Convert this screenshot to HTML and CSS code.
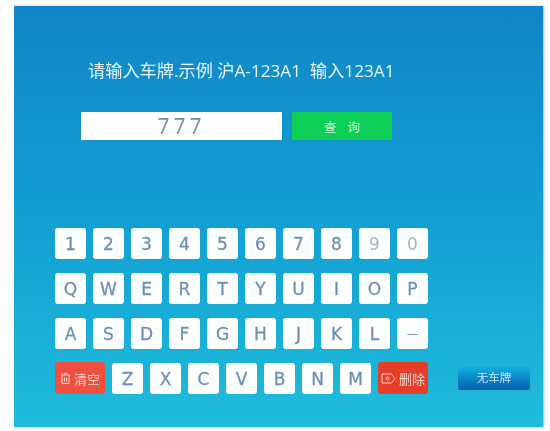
FILE: index.html
```html
<!DOCTYPE html>
<html lang="en">

<head>
    <title>车牌查询</title>
    <link rel="stylesheet" href="styles.css">
</head>

<body>
    <div class="panel">
        <p class="hint">请输入车牌.示例 沪A-123A1&nbsp;&nbsp;输入123A1</p>

        <div class="search-row">
            <div class="plate-input">777</div>
            <button class="search-btn">查&nbsp;&nbsp;&nbsp;&nbsp;询</button>
        </div>

        <div class="keyboard-row">
            <div class="keyboard">
                <div class="key-row">
                    <button class="key">1</button>
                    <button class="key">2</button>
                    <button class="key">3</button>
                    <button class="key">4</button>
                    <button class="key">5</button>
                    <button class="key">6</button>
                    <button class="key">7</button>
                    <button class="key">8</button>
                    <button class="key key-light">9</button>
                    <button class="key key-light">0</button>
                </div>
                <div class="key-row">
                    <button class="key">Q</button>
                    <button class="key">W</button>
                    <button class="key">E</button>
                    <button class="key">R</button>
                    <button class="key">T</button>
                    <button class="key">Y</button>
                    <button class="key">U</button>
                    <button class="key">I</button>
                    <button class="key">O</button>
                    <button class="key">P</button>
                </div>
                <div class="key-row">
                    <button class="key">A</button>
                    <button class="key">S</button>
                    <button class="key">D</button>
                    <button class="key">F</button>
                    <button class="key">G</button>
                    <button class="key">H</button>
                    <button class="key">J</button>
                    <button class="key">K</button>
                    <button class="key">L</button>
                    <button class="key key-dash">—</button>
                </div>
                <div class="key-row">
                    <button class="action-key clear-key">
                        <svg class="action-icon" width="11" height="13" viewBox="0 0 11 13" fill="none" stroke="currentColor">
                            <path d="M1 3h9M4 3V1.5h3V3M2 3v8.5h7V3M4.5 5.5v4M6.5 5.5v4"/>
                        </svg>
                        清空
                    </button>
                    <button class="key">Z</button>
                    <button class="key">X</button>
                    <button class="key">C</button>
                    <button class="key">V</button>
                    <button class="key">B</button>
                    <button class="key">N</button>
                    <button class="key">M</button>
                    <button class="action-key delete-key">
                        <svg class="action-icon" width="15" height="11" viewBox="0 0 15 11" fill="none" stroke="currentColor">
                            <path d="M1 1h9.5l3.5 4.5-3.5 4.5H1z"/>
                            <circle cx="6.5" cy="5.5" r="1.5"/>
                        </svg>
                        删除
                    </button>
                </div>
            </div>
            <button class="no-plate">无车牌</button>
        </div>
    </div>
</body>

</html>
```

FILE: styles.css
```css
body {
    margin: 0;
    background-color: #ffffff;
    font-family: "Liberation Sans", "Noto Sans CJK SC", sans-serif;
}

/* Blue panel */
.panel {
    width: 529px;
    height: 421px;
    margin: 6px 0 0 14px;
    box-sizing: border-box;
    padding-top: 54px;
    background: linear-gradient(to bottom, #1285c7 0%, #129fd2 50%, #1fbcdb 100%);
    box-shadow: 1px 0 2px #9fb6c4;
    filter: blur(0.4px);
}

.hint {
    margin: 0 0 0 74px;
    height: 22px;
    line-height: 22px;
    font-family: "Open Sans", "Noto Sans CJK SC", sans-serif;
    font-size: 17.2px;
    color: #e6f5fa;
    white-space: nowrap;
}

.search-row {
    display: flex;
    gap: 10px;
    margin: 30px 0 0 67px;
}

.plate-input {
    width: 201px;
    height: 28px;
    line-height: 29px;
    background-color: #ffffff;
    color: #6f8fb0;
    font-family: "Open Sans", sans-serif;
    font-size: 21px;
    letter-spacing: 4px;
    text-align: center;
}

.search-btn {
    width: 100px;
    height: 28px;
    padding: 0;
    border: none;
    background-color: #0bd055;
    color: #d5f5e0;
    font-family: "Noto Sans CJK SC", sans-serif;
    font-size: 12.5px;
}

/* Keyboard */
.keyboard-row {
    display: flex;
    align-items: flex-end;
    gap: 30px;
    margin: 88px 0 0 41px;
}

.keyboard {
    display: flex;
    flex-direction: column;
    gap: 14px;
}

.key-row {
    display: flex;
    align-items: flex-end;
    gap: 7px;
}

.key {
    width: 31px;
    height: 31px;
    padding: 0;
    border: none;
    border-radius: 3px;
    background-color: #fdfefe;
    color: #6e90b4;
    font-family: "DejaVu Sans", sans-serif;
    font-size: 17px;
    -webkit-text-stroke: 0.3px #6e90b4;
}

.key-light {
    color: #a3b5c4;
    -webkit-text-stroke: 0;
}

.key-dash {
    font-size: 11px;
}

.action-key {
    display: flex;
    align-items: center;
    justify-content: center;
    gap: 3px;
    width: 50px;
    height: 32px;
    margin-top: -1px;
    padding: 0;
    border: none;
    border-radius: 3px;
    color: #f6d5cc;
    font-family: "Noto Sans CJK SC", sans-serif;
    font-size: 13px;
    white-space: nowrap;
}

.clear-key {
    background-color: #f0503f;
}

.delete-key {
    background-color: #e63f29;
}

.no-plate {
    width: 72px;
    height: 23px;
    margin-bottom: 4px;
    padding: 0 0 3px;
    border: none;
    border-radius: 2px;
    background: linear-gradient(to bottom, #12b0dd 0%, #0a7cc4 60%, #0562a8 100%);
    color: #cfeaf5;
    font-family: "Noto Sans CJK SC", sans-serif;
    font-size: 11.5px;
}
```
